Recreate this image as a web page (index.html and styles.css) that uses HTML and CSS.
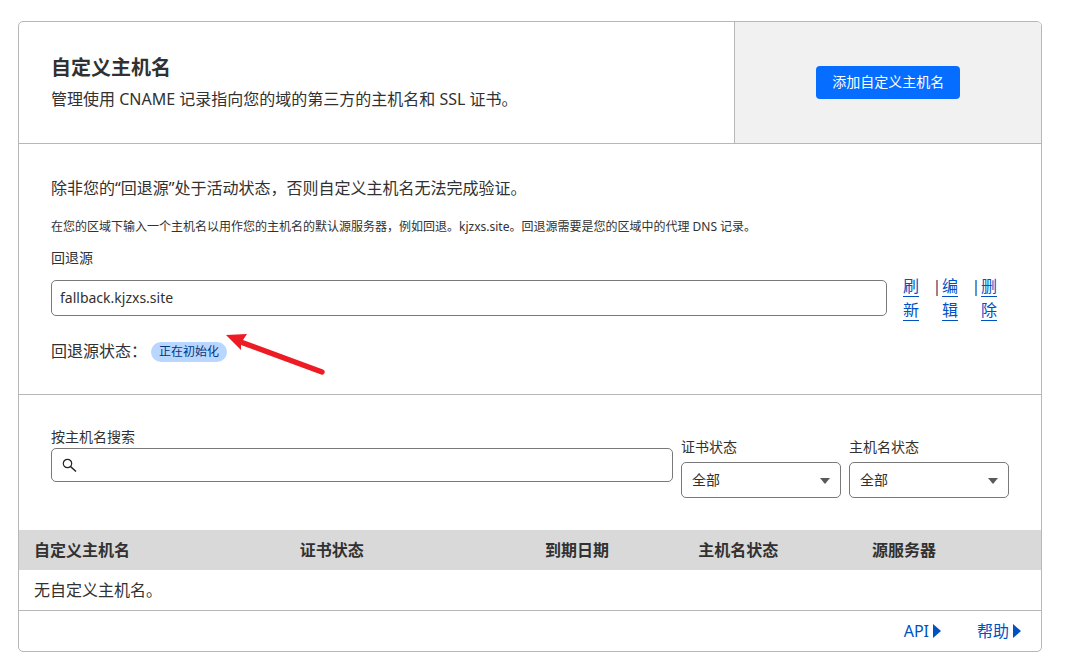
FILE: index.html
```html
<!DOCTYPE html>
<html lang="zh-CN">
<head>
<meta charset="utf-8">
<meta name="viewport" content="width=device-width, initial-scale=1">
<title>自定义主机名</title>
<link rel="stylesheet" href="styles.css">
</head>
<body>
<main class="card">
  <header class="card-header">
    <div class="intro">
      <h1 class="title">自定义主机名</h1>
      <p class="text">管理使用 CNAME 记录指向您的域的第三方的主机名和 SSL 证书。</p>
    </div>
    <div class="actions">
      <button class="primary" type="button">添加自定义主机名</button>
    </div>
  </header>

  <section class="fallback">
    <p class="text">除非您的“回退源”处于活动状态，否则自定义主机名无法完成验证。</p>
    <p class="hint">在您的区域下输入一个主机名以用作您的主机名的默认源服务器，例如回退。kjzxs.site。回退源需要是您的区域中的代理 DNS 记录。</p>
    <label class="label" for="origin">回退源</label>
    <div class="origin-row">
      <input class="field origin" id="origin" type="text" value="fallback.kjzxs.site">
      <nav class="links">
        <a class="link" href="#refresh">刷新</a>
        <span class="bar">|</span>
        <a class="link" href="#edit">编辑</a>
        <span class="bar">|</span>
        <a class="link" href="#delete">删除</a>
      </nav>
    </div>
    <div class="status">
      <span>回退源状态：</span>
      <span class="badge">正在初始化
        <svg class="arrow" width="100" height="44" viewBox="0 0 100 44" aria-hidden="true">
          <path d="M0 2 21 1 17 7 97 36.500A2.500 2.500 0 0 1 95 41.500L15 12 15 17Z" fill="#ed1c24"/>
        </svg>
      </span>
    </div>
  </section>

  <section class="filters">
    <div class="search">
      <label class="label" for="search">按主机名搜索</label>
      <div class="search-box">
        <svg class="lens" width="16" height="16" viewBox="0 0 16 16" aria-hidden="true">
          <circle cx="5.500" cy="6.500" r="4.200" fill="none" stroke="#222" stroke-width="1.200"/>
          <path d="M8.500 9.500 14 14.500" stroke="#222" stroke-width="1.500"/>
        </svg>
        <input class="search-input" id="search" type="text">
      </div>
    </div>
    <div class="filter">
      <label class="label" for="cert">证书状态</label>
      <div class="select-wrap">
        <select class="field select" id="cert"><option>全部</option></select>
      </div>
    </div>
    <div class="filter">
      <label class="label" for="host">主机名状态</label>
      <div class="select-wrap">
        <select class="field select" id="host"><option>全部</option></select>
      </div>
    </div>
  </section>

  <table class="table">
    <thead>
      <tr>
        <th class="c-name">自定义主机名</th>
        <th class="c-cert">证书状态</th>
        <th class="c-date">到期日期</th>
        <th class="c-host">主机名状态</th>
        <th class="c-origin">源服务器</th>
      </tr>
    </thead>
    <tbody>
      <tr><td colspan="5">无自定义主机名。</td></tr>
    </tbody>
  </table>

  <footer class="footer">
    <a class="more" href="#api">API<svg width="8" height="14" viewBox="0 0 8 14" aria-hidden="true"><path d="M0 0 8 7 0 14Z" fill="#0051c3"/></svg></a>
    <a class="more" href="#help">帮助<svg width="8" height="14" viewBox="0 0 8 14" aria-hidden="true"><path d="M0 0 8 7 0 14Z" fill="#0051c3"/></svg></a>
  </footer>
</main>
</body>
</html>
```
FILE: styles.css
```css
* {
  box-sizing: border-box;
}

body {
  margin: 0;
  padding: 21px 37px 7px 18px;
  background: #fff;
  color: #313131;
  font: 16px/24px "Noto Sans", "Noto Sans CJK SC", sans-serif;
}

h1, p {
  margin: 0;
}

.card {
  border: 1px solid #b6b7b7;
  border-radius: 5px;
  overflow: hidden;
}

.card-header {
  display: flex;
  border-bottom: 1px solid #b6b7b7;
}

.intro {
  flex: 1;
  padding: 32px;
}

.title {
  font-size: 20px;
  line-height: 28px;
  font-weight: 700;
  padding-bottom: 5px;
}

.actions {
  flex: 0 0 30%;
  display: flex;
  align-items: center;
  justify-content: center;
  border-left: 1px solid #b6b7b7;
  background: #f1f1f1;
}

.primary {
  height: 33px;
  padding: 0 16px 2px;
  border: 0;
  border-radius: 4px;
  background: #056dff;
  color: #fff;
  font: inherit;
  font-size: 14px;
}

.fallback {
  padding: 32px 32px 31px;
  border-bottom: 1px solid #b6b7b7;
}

.hint {
  margin-top: 17px;
  font-size: 12px;
  line-height: 20px;
}

.label {
  display: block;
  font-size: 14px;
  line-height: 20px;
}

.fallback .label {
  margin: 11px 0 12px;
}

.field {
  width: 100%;
  height: 36px;
  border: 1px solid #797979;
  border-radius: 5px;
  background: #fff;
  color: #313131;
  font: inherit;
  font-size: 14px;
}

.origin-row {
  display: flex;
  height: 48px;
}

.origin {
  flex: 1;
  min-width: 0;
  padding: 0 8px 2px;
}

.links {
  display: flex;
  padding: 0 12px 0 16px;
  margin-top: -6px;
}

.link {
  width: 16px;
  color: #0051c3;
  text-underline-offset: 4px;
  text-decoration-thickness: 1px;
}

.bar {
  width: 10px;
  margin-left: 13px;
  text-align: center;
  color: #1d3f70;
}

.status {
  display: flex;
  align-items: center;
  gap: 4px;
  margin-top: 11px;
}

.badge {
  position: relative;
  margin-top: 2px;
  padding: 0 8px;
  border-radius: 10px;
  background: #b9d6ff;
  color: #003681;
  font-size: 12px;
  line-height: 20px;
}

.arrow {
  position: absolute;
  left: 75px;
  top: -9px;
}

.filters {
  display: grid;
  grid-template-columns: 1fr 160px 160px;
  gap: 8px;
  padding: 32px;
}

.search-box {
  display: flex;
  align-items: center;
  gap: 8px;
  height: 34px;
  margin-top: 1px;
  padding: 0 10px;
  border: 1px solid #797979;
  border-radius: 5px;
}

.lens {
  flex: none;
}

.search-input {
  flex: 1;
  min-width: 0;
  border: 0;
  outline: 0;
  background: none;
  font: inherit;
}

.filter {
  padding-top: 10px;
}

.select-wrap {
  position: relative;
  margin-top: 5px;
}

.select-wrap::after {
  content: "";
  position: absolute;
  right: 11px;
  top: 16px;
  border: 5px solid transparent;
  border-top: 6px solid #595959;
  border-bottom: 0;
  pointer-events: none;
}

.select {
  display: block;
  padding: 0 10px;
  appearance: none;
}

.table {
  width: 100%;
  table-layout: fixed;
  border-collapse: collapse;
}

.table th,
.table td {
  height: 40px;
  padding: 0 15px;
  text-align: left;
}

.table th {
  background: #d9d9d9;
  font-weight: 700;
}

.c-name { width: 26%; }
.c-cert { width: 24%; }
.c-date { width: 15%; }
.c-host { width: 17%; }
.c-origin { width: 18%; }

.footer {
  display: flex;
  justify-content: flex-end;
  gap: 36px;
  height: 41px;
  padding: 0 20px;
  border-top: 1px solid #b6b7b7;
}

.more {
  display: flex;
  align-items: center;
  gap: 4px;
  color: #0051c3;
  text-decoration: none;
}
```
